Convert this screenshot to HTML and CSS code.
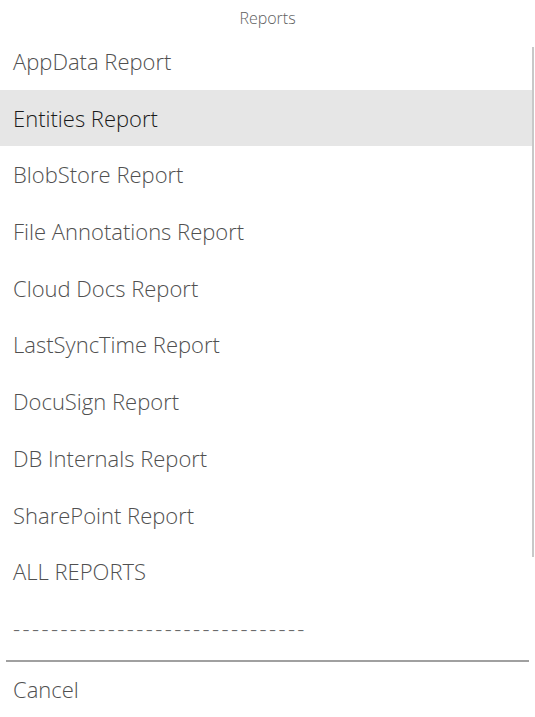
FILE: index.html
```html
<!DOCTYPE html>
<html>
<head>
<meta charset="utf-8">
<link rel="stylesheet" href="styles.css">
</head>
<body>
<div class="sheet">
  <div class="title">Reports</div>
  <div class="list">
    <div class="item">AppData Report</div>
    <div class="item selected">Entities Report</div>
    <div class="item">BlobStore Report</div>
    <div class="item">File Annotations Report</div>
    <div class="item">Cloud Docs Report</div>
    <div class="item">LastSyncTime Report</div>
    <div class="item">DocuSign Report</div>
    <div class="item">DB Internals Report</div>
    <div class="item">SharePoint Report</div>
    <div class="item">ALL REPORTS</div>
    <div class="item dashes">-------------------------------</div>
    <div class="scrollbar"></div>
  </div>
  <div class="separator"></div>
  <div class="item cancel">Cancel</div>
</div>
</body>
</html>
```
FILE: styles.css
```css
html, body {
  margin: 0;
  padding: 0;
  background: #ffffff;
}
.sheet {
  width: 535px;
  height: 717px;
  font-family: "Open Sans", "Noto Sans", sans-serif;
  overflow: hidden;
}
.title {
  height: 33px;
  line-height: 36px;
  text-align: center;
  font-size: 16px;
  font-weight: 300;
  color: #606060;
}
.list {
  position: relative;
  width: 534px;
}
.item {
  height: 56.7px;
  line-height: 56.7px;
  padding-left: 13px;
  font-size: 22px;
  font-weight: 300;
  color: #505050;
  white-space: nowrap;
}
.item.selected {
  background: #e6e6e6;
  color: #1a1a1a;
}
.item.dashes {
  letter-spacing: 2.4px;
  color: #6a6a6a;
}
.scrollbar {
  position: absolute;
  right: 0;
  top: 14px;
  width: 2px;
  height: 510px;
  background: #c8c8c8;
}
.separator {
  margin: 3px 6px 0 6px;
  height: 2px;
  background: #a0a0a0;
}
.cancel {
  height: 54px;
  line-height: 54px;
}
```
